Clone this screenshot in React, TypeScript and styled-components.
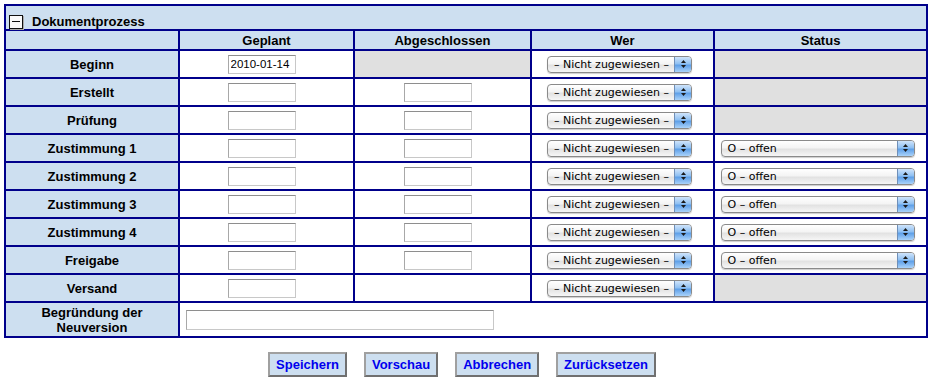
import styled, { createGlobalStyle } from "styled-components";

const navy = "#00008b";
const paleBlue = "#cddff0";
const grey = "#e0e0e0";

const GlobalStyle = createGlobalStyle`
  body {
    margin: 0;
    background: #ffffff;
    font-family: "Liberation Sans", Arial, sans-serif;
  }
`;

type Step = {
  label: string;
  planned?: string;
  done: boolean;
  status: boolean;
};

const steps: Step[] = [
  { label: "Beginn", planned: "2010-01-14", done: false, status: false },
  { label: "Erstellt", done: true, status: false },
  { label: "Prüfung", done: true, status: false },
  { label: "Zustimmung 1", done: true, status: true },
  { label: "Zustimmung 2", done: true, status: true },
  { label: "Zustimmung 3", done: true, status: true },
  { label: "Zustimmung 4", done: true, status: true },
  { label: "Freigabe", done: true, status: true },
  { label: "Versand", done: false, status: false },
];

const Arrows = () => (
  <svg width="7" height="10" viewBox="0 0 7 10">
    <path d="M3.5 1 L6 4 L1 4 Z" fill="#1a1a1a" />
    <path d="M3.5 9 L6 6 L1 6 Z" fill="#1a1a1a" />
  </svg>
);

const AquaSelect = ({ value, width }: { value: string; width: number }) => (
  <SelectBox style={{ width }}>
    <SelectText>{value}</SelectText>
    <SelectCap>
      <Arrows />
    </SelectCap>
  </SelectBox>
);

const App = () => {
  return (
    <Page>
      <GlobalStyle />
      <Grid>
        <colgroup>
          <col style={{ width: 174 }} />
          <col style={{ width: 175 }} />
          <col style={{ width: 177 }} />
          <col style={{ width: 183 }} />
          <col style={{ width: 213 }} />
        </colgroup>
        <tbody>
          <tr>
            <TitleCell colSpan={5}>
              <TitleInner>
                <Toggle />
                Dokumentprozess
              </TitleInner>
            </TitleCell>
          </tr>
          <tr>
            <HeadCell />
            <HeadCell>Geplant</HeadCell>
            <HeadCell>Abgeschlossen</HeadCell>
            <HeadCell>Wer</HeadCell>
            <HeadCell>Status</HeadCell>
          </tr>
          {steps.map((s) => (
            <tr key={s.label}>
              <LabelCell>{s.label}</LabelCell>
              <Cell>
                <DateInput defaultValue={s.planned ?? ""} />
              </Cell>
              {s.label === "Beginn" ? (
                <Cell $muted />
              ) : (
                <Cell>{s.done && <DateInput defaultValue="" />}</Cell>
              )}
              <Cell>
                <AquaSelect value="– Nicht zugewiesen –" width={145} />
              </Cell>
              <Cell $muted={!s.status}>
                {s.status && <AquaSelect value="O – offen" width={194} />}
              </Cell>
            </tr>
          ))}
          <tr>
            <LabelCell $tall>
              Begründung der
              <br />
              Neuversion
            </LabelCell>
            <WideCell colSpan={4}>
              <ReasonInput defaultValue="" />
            </WideCell>
          </tr>
        </tbody>
      </Grid>
      <Actions>
        <ActionButton>Speichern</ActionButton>
        <ActionButton>Vorschau</ActionButton>
        <ActionButton>Abbrechen</ActionButton>
        <ActionButton>Zurücksetzen</ActionButton>
      </Actions>
    </Page>
  );
};

export default App;

const Page = styled.div`
  padding: 4px 0 0 4px;
  width: 922px;
`;

const Grid = styled.table`
  width: 922px;
  border-collapse: collapse;
  table-layout: fixed;
  border: 2px solid ${navy};
  font-size: 13px;
`;

const TitleCell = styled.td`
  background: ${paleBlue};
  border: 2px solid ${navy};
  height: 23px;
  padding: 0 3px;
  vertical-align: bottom;
`;

const TitleInner = styled.div`
  display: flex;
  align-items: center;
  gap: 9px;
  font-weight: 700;
  font-size: 13px;
  color: #000;
  padding-bottom: 0;
`;

const Toggle = styled.span`
  position: relative;
  width: 12px;
  height: 12px;
  border: 1px solid #111;
  background: #fafafa;
  box-shadow: 1px 1px 0 #aaa;

  &::after {
    content: "";
    position: absolute;
    left: 2px;
    right: 2px;
    top: 5px;
    height: 1px;
    background: #111;
  }
`;

const HeadCell = styled.th`
  background: ${paleBlue};
  border: 2px solid ${navy};
  height: 18px;
  padding: 0;
  font-weight: 700;
  font-size: 13px;
  text-align: center;
  color: #000;
`;

const LabelCell = styled.td<{ $tall?: boolean }>`
  background: ${paleBlue};
  border: 2px solid ${navy};
  height: ${(p) => (p.$tall ? "33px" : "26px")};
  padding: 0;
  font-weight: 700;
  text-align: center;
  line-height: ${(p) => (p.$tall ? "15px" : "normal")};
  color: #000;
`;

const Cell = styled.td<{ $muted?: boolean }>`
  background: ${(p) => (p.$muted ? grey : "#fff")};
  border: 2px solid ${navy};
  height: 26px;
  padding: 0;
  text-align: center;
  vertical-align: middle;
`;

const WideCell = styled.td`
  border: 2px solid ${navy};
  padding: 0 0 0 6px;
  vertical-align: middle;
`;

const DateInput = styled.input`
  box-sizing: border-box;
  width: 68px;
  height: 19px;
  margin: 0 10px 0 0;
  padding: 1px 2px;
  border: 1px solid #c8c8c8;
  border-top-color: #8e8e8e;
  border-left-color: #a8a8a8;
  font-family: "Liberation Sans", Arial, sans-serif;
  font-size: 11.5px;
  color: #000;
  vertical-align: middle;
  outline: none;
`;

const ReasonInput = styled(DateInput)`
  width: 308px;
  height: 20px;
  margin: 0;
`;

const SelectBox = styled.span`
  box-sizing: border-box;
  display: inline-flex;
  align-items: center;
  height: 17px;
  margin-right: 6px;
  border: 1px solid #8a8a8a;
  border-radius: 4px;
  background: linear-gradient(#ffffff 0%, #f4f4f4 45%, #e2e2e2 55%, #f6f6f6 100%);
  box-shadow: 0 1px 1px rgba(0, 0, 0, 0.2);
  overflow: hidden;
  vertical-align: middle;
  text-align: left;
`;

const SelectText = styled.span`
  flex: 1;
  padding-left: 6px;
  font-family: "DejaVu Sans", Verdana, sans-serif;
  font-size: 11px;
  color: #000;
  white-space: nowrap;
`;

const SelectCap = styled.span`
  display: flex;
  align-items: center;
  justify-content: center;
  width: 16px;
  align-self: stretch;
  border-left: 1px solid #6f8fb8;
  background: linear-gradient(#cfe4fb 0%, #8fc0f2 45%, #5fa0e8 55%, #a9d2fa 100%);
`;

const Actions = styled.div`
  display: flex;
  justify-content: center;
  gap: 17px;
  padding: 14px 6px 0 0;
  width: 916px;
`;

const ActionButton = styled.button`
  height: 25px;
  padding: 0 6px;
  background: ${paleBlue};
  border: 2px solid;
  border-color: #a0a0a0 #707070 #707070 #a0a0a0;
  color: #0000ee;
  font-family: "Liberation Sans", Arial, sans-serif;
  font-weight: 700;
  font-size: 13px;
`;
